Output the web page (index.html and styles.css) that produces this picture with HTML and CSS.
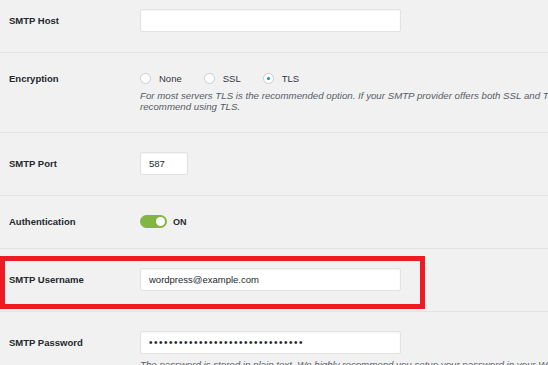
FILE: index.html
```html
<!DOCTYPE html>
<html lang="en">
<head>
  <meta charset="UTF-8" />
  <title>SMTP Settings</title>
  <link rel="stylesheet" href="styles.css">
</head>
<body>

<div class="settings">
  <!--  HOST  -->
  <div class="row first">
    <div class="label">SMTP Host</div>
    <div class="field"><input type="text" class="input wide" value=""></div>
  </div>

  <!--  ENCRYPTION  -->
  <div class="row">
    <div class="label short">Encryption</div>
    <div class="field">
      <div class="radios">
        <label class="radio"><span class="dot"></span>None</label>
        <label class="radio"><span class="dot"></span>SSL</label>
        <label class="radio"><span class="dot checked"></span>TLS</label>
      </div>
      <p class="desc">For most servers TLS is the recommended option. If your SMTP provider offers both SSL and TLS, we<br>recommend using TLS.</p>
    </div>
  </div>

  <!--  PORT  -->
  <div class="row">
    <div class="label">SMTP Port</div>
    <div class="field"><input type="text" class="input port" value="587"></div>
  </div>

  <!--  AUTH  -->
  <div class="row">
    <div class="label short">Authentication</div>
    <div class="field toggle-wrap">
      <span class="toggle"><span class="knob"></span></span>
      <span class="on">ON</span>
    </div>
  </div>

  <!--  USERNAME  -->
  <div class="row">
    <div class="label">SMTP Username</div>
    <div class="field"><input type="text" class="input wide" value="wordpress@example.com"></div>
    <div class="highlight"></div>
  </div>

  <!--  PASSWORD  -->
  <div class="row">
    <div class="label">SMTP Password</div>
    <div class="field">
      <input type="password" class="input wide secret" value="wordpresspassword12345678901234">
      <p class="desc">The password is stored in plain text. We highly recommend you setup your password in your WordPress configuration file for improved security.</p>
    </div>
  </div>
</div>

</body>
</html>
```

FILE: styles.css
```css
/* ----------  GLOBAL  ---------- */
*{box-sizing:border-box}
html,body{margin:0;padding:0;overflow:hidden}
body{background:#f1f1f1;color:#23282d;font-family:"Liberation Sans",Arial,sans-serif;font-size:9.5px}

/* ----------  ROWS  ---------- */
.settings{width:548px}
.row{position:relative;display:flex;padding:19px 0 20px;border-bottom:1px solid #e3e3e3}
.row.first{padding-top:9px}
.label{width:140px;padding-left:9px;font-weight:bold;line-height:23px;flex-shrink:0}
.label.short{line-height:13px}
.field{flex:1;min-width:0}

/* ----------  INPUTS  ---------- */
.input{display:block;height:23px;padding:0 8px;background:#fff;border:1px solid #e2e2e2;border-radius:2px;
  box-shadow:inset 0 1px 2px rgba(0,0,0,.05);font-family:inherit;font-size:9.5px;color:#23282d;outline:none}
.input.wide{width:261px}
.input.port{width:48px}
.input.secret{letter-spacing:1.5px;font-size:10px}

/* ----------  RADIOS  ---------- */
.radios{display:flex;align-items:center;height:13px}
.radio{display:flex;align-items:center;margin-right:22px;color:#32373c}
.dot{width:11px;height:11px;margin-right:8px;border:1px solid #c9cdd1;border-radius:50%;background:#fff;position:relative}
.dot.checked::after{content:"";position:absolute;left:3px;top:3px;width:3px;height:3px;border-radius:50%;background:#1e8cbe}
.desc{margin:5px 0 0;font-size:9.7px;font-style:italic;color:#555d66;line-height:11px;white-space:nowrap}

/* ----------  TOGGLE  ---------- */
.toggle-wrap{display:flex;align-items:center;height:13px}
.toggle{width:27px;height:13px;border-radius:7px;background:#82b541;position:relative;margin-right:6px}
.knob{position:absolute;right:2px;top:2px;width:9px;height:9px;border-radius:50%;background:#fff}
.on{font-weight:bold;font-size:9px}

/* ----------  HIGHLIGHT  ---------- */
.highlight{position:absolute;left:0;top:7px;width:425px;height:53px;border:5px solid #ec1c24}
```
